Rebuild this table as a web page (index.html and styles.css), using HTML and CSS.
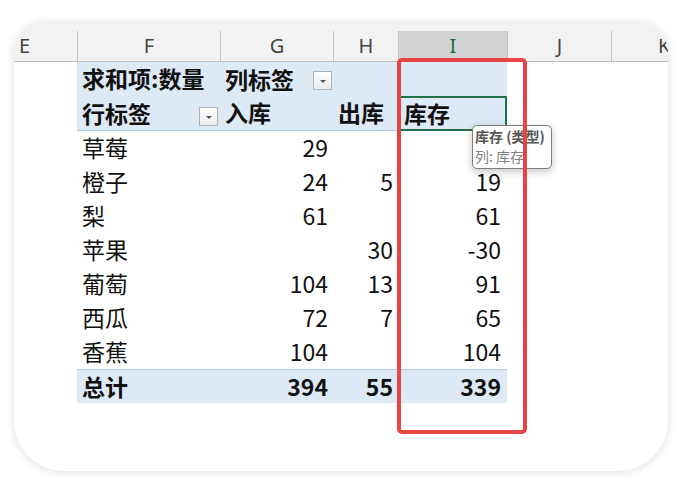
FILE: index.html
```html
<!DOCTYPE html>
<html lang="zh-CN">
<head>
<meta charset="utf-8">
<link rel="stylesheet" href="styles.css">
</head>
<body>
<div class="card">
  <div class="colhdr">
    <div class="ch ch-e">E</div>
    <div class="ch">F</div>
    <div class="ch">G</div>
    <div class="ch">H</div>
    <div class="ch ch-sel">I</div>
    <div class="ch">J</div>
    <div class="ch ch-k">K</div>
  </div>

  <div class="row">
    <div class="c"></div>
    <div class="c blue bold pl">求和项:数量</div>
    <div class="c blue bold pl spread">列标签<span class="dd"></span></div>
    <div class="c blue"></div>
    <div class="c blue"></div>
    <div class="c"></div><div class="c"></div>
  </div>
  <div class="row row-hdr2">
    <div class="c"></div>
    <div class="c blue bold pl spread bb">行标签<span class="dd dd2"></span></div>
    <div class="c blue bold pl bb">入库</div>
    <div class="c blue bold pl bb">出库</div>
    <div class="c blue bold pl bb selcell">库存</div>
    <div class="c"></div><div class="c"></div>
  </div>

  <div class="row"><div class="c"></div><div class="c pl">草莓</div><div class="c num">29</div><div class="c num"></div><div class="c num ni"></div><div class="c"></div><div class="c"></div></div>
  <div class="row"><div class="c"></div><div class="c pl">橙子</div><div class="c num">24</div><div class="c num">5</div><div class="c num ni">19</div><div class="c"></div><div class="c"></div></div>
  <div class="row"><div class="c"></div><div class="c pl">梨</div><div class="c num">61</div><div class="c num"></div><div class="c num ni">61</div><div class="c"></div><div class="c"></div></div>
  <div class="row"><div class="c"></div><div class="c pl">苹果</div><div class="c num"></div><div class="c num">30</div><div class="c num ni">-30</div><div class="c"></div><div class="c"></div></div>
  <div class="row"><div class="c"></div><div class="c pl">葡萄</div><div class="c num">104</div><div class="c num">13</div><div class="c num ni">91</div><div class="c"></div><div class="c"></div></div>
  <div class="row"><div class="c"></div><div class="c pl">西瓜</div><div class="c num">72</div><div class="c num">7</div><div class="c num ni">65</div><div class="c"></div><div class="c"></div></div>
  <div class="row"><div class="c"></div><div class="c pl">香蕉</div><div class="c num">104</div><div class="c num"></div><div class="c num ni">104</div><div class="c"></div><div class="c"></div></div>
  <div class="row row-total">
    <div class="c"></div>
    <div class="c blue bold pl bt">总计</div>
    <div class="c blue bold num bt">394</div>
    <div class="c blue bold num bt">55</div>
    <div class="c blue bold num ni bt">339</div>
    <div class="c"></div><div class="c"></div>
  </div>

  <div class="tooltip">
    <div class="tt-title">库存 (类型)</div>
    <div class="tt-sub">列: 库存</div>
  </div>
  <div class="redbox"></div>
</div>
</body>
</html>
```

FILE: styles.css
```css
html, body {
  margin: 0;
  padding: 0;
  background: #ffffff;
}
body {
  width: 682px;
  height: 484px;
  overflow: hidden;
  font-family: "Noto Sans CJK SC", "Noto Sans", sans-serif;
}
.card {
  position: relative;
  margin: 22px 0 0 14px;
  width: 654px;
  height: 449px;
  background: #ffffff;
  border-radius: 30px 30px 50px 50px;
  box-shadow: 0 1px 10px rgba(0, 0, 0, 0.13);
  overflow: hidden;
}
.colhdr {
  display: grid;
  grid-template-columns: 63px 143px 113px 65px 109px 104px 57px;
  padding-top: 9px;
  background: #f2f2f2;
  border-top: 1px solid #dcdcdc;
  border-bottom: 1px solid #bdbdbd;
  margin-top: -1px;
}
.ch {
  height: 30px;
  line-height: 30px;
  text-align: center;
  font-family: "Noto Sans", sans-serif;
  font-size: 20px;
  color: #444;
  border-left: 1px solid #c4c4c4;
  box-sizing: border-box;
}
.ch-e {
  border-left: none;
  text-align: left;
  padding-left: 5px;
}
.ch-sel {
  background: #d3d3d3;
  color: #1e6b41;
}
.ch-k {
  text-align: left;
  padding-left: 46px;
}
.row {
  display: grid;
  grid-template-columns: 63px 143px 113px 65px 109px 104px 57px;
  height: 34px;
}
.row-hdr2 {
  height: 35px;
}
.c {
  box-sizing: border-box;
  height: 100%;
  font-size: 23px;
  line-height: 33px;
  color: #111;
  white-space: nowrap;
}
.blue {
  background: #dde9f5;
}
.bold {
  font-weight: 700;
}
.pl {
  padding-left: 5px;
}
.num {
  text-align: right;
  padding-right: 5px;
}
.ni {
  padding-right: 6px;
}
.spread {
  display: flex;
  align-items: center;
  justify-content: space-between;
  padding-right: 1px;
}
.bb {
  border-bottom: 1px solid #a9c8e6;
}
.bt {
  border-top: 1px solid #a9c8e6;
  line-height: 32px;
}
.selcell {
  border: 2px solid #22724a;
  line-height: 30px;
  padding-left: 4px;
}
.dd {
  width: 19px;
  height: 19px;
  box-sizing: border-box;
  border: 1px solid #b3b3b3;
  background: linear-gradient(#ffffff, #ececec);
  position: relative;
  margin-top: 2px;
}
.dd::after {
  content: "";
  position: absolute;
  left: 6px;
  top: 8px;
  border-left: 3px solid transparent;
  border-right: 3px solid transparent;
  border-top: 3px solid #555;
}
.dd2 {
  margin-right: 1px;
  margin-top: 6px;
}
.tooltip {
  position: absolute;
  left: 458px;
  top: 103px;
  width: 80px;
  height: 44px;
  box-sizing: border-box;
  background: #ffffff;
  border: 1px solid #7d7d7d;
  border-radius: 5px;
  box-shadow: 0 3px 9px rgba(0, 0, 0, 0.22);
  padding: 0 0 0 2px;
  font-size: 14px;
  line-height: 20px;
  white-space: nowrap;
  overflow: hidden;
}
.tt-title {
  font-weight: 700;
  color: #555;
}
.tt-sub {
  color: #808080;
}
.redbox {
  position: absolute;
  left: 383px;
  top: 36px;
  width: 130px;
  height: 376px;
  box-sizing: border-box;
  border: 4.5px solid #e94444;
  border-radius: 5px;
}
```
